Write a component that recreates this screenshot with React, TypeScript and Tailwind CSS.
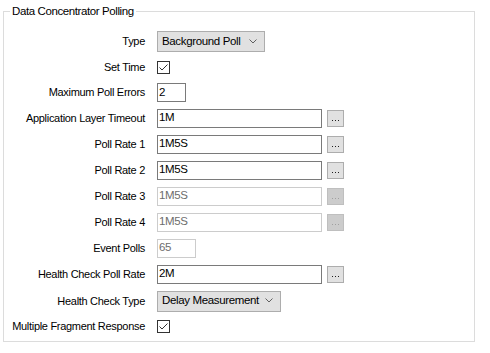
import React from "react";

const font = { fontFamily: '"Liberation Sans", Arial, sans-serif' };

function Dots({ disabled }: { disabled?: boolean }) {
  const c = disabled ? "bg-[#a0a0a0]" : "bg-[#202020]";
  return (
    <div
      className={`ml-[5px] w-[17px] h-[17px] border flex items-end justify-center pb-[5px] ${
        disabled ? "bg-[#cccccc] border-[#bfbfbf]" : "bg-[#e1e1e1] border-[#adadad]"
      }`}
    >
      <span className={`w-[1px] h-[1px] ${c}`} />
      <span className={`w-[1px] h-[1px] ml-[2px] ${c}`} />
      <span className={`w-[1px] h-[1px] ml-[2px] ${c}`} />
    </div>
  );
}

function TextBox({ value, w, disabled }: { value: string; w: number; disabled?: boolean }) {
  return (
    <div
      className={`h-[19px] border flex items-center pl-[1px] text-[11.5px] leading-none bg-white ${
        disabled ? "border-[#cccccc] text-[#6d6d6d]" : "border-[#7a7a7a] text-black"
      }`}
      style={{ width: w }}
    >
      {value}
    </div>
  );
}

function Combo({ value, w }: { value: string; w: number }) {
  return (
    <div
      className="h-[21px] border border-[#adadad] bg-[#e1e1e1] flex items-center justify-between pl-[4px] pr-[7px] text-[11.5px] text-black"
      style={{ width: w }}
    >
      <span>{value}</span>
      <svg width="8" height="5" viewBox="0 0 8 5" className="mb-[1px]">
        <path d="M0.5 0.5 L4 4 L7.5 0.5" fill="none" stroke="#606060" strokeWidth="1" />
      </svg>
    </div>
  );
}

function Check() {
  return (
    <div className="w-[13px] h-[13px] border border-[#333333] bg-white flex items-center justify-center">
      <svg width="11" height="11" viewBox="0 0 11 11">
        <path d="M1.5 5.5 L4 8 L9.5 2.5" fill="none" stroke="#333333" strokeWidth="1" />
      </svg>
    </div>
  );
}

function Row({ label, h, children }: { label: string; h: number; children: React.ReactNode }) {
  return (
    <div className="flex items-center" style={{ height: h }}>
      <div className="w-[141px] text-right text-[11px] tracking-[-0.3px] text-black whitespace-nowrap">{label}</div>
      <div className="ml-[12px] flex items-center tracking-[-0.35px]">{children}</div>
    </div>
  );
}

export default function App() {
  return (
    <div className="w-[490px] h-[353px] bg-white overflow-hidden" style={font}>
      <div className="ml-[3px] mt-[11px] w-[472px] h-[331px] border border-[#dcdcdc] relative pt-[17px]">
        <div className="absolute left-[6px] top-[-9px] bg-white px-[2px] text-[11.5px] tracking-[-0.4px] leading-[16px] text-black">
          Data Concentrator Polling
        </div>
        <Row label="Type" h={25}>
          <Combo value="Background Poll" w={108} />
        </Row>
        <Row label="Set Time" h={26}>
          <Check />
        </Row>
        <Row label="Maximum Poll Errors" h={25}>
          <TextBox value="2" w={29} />
        </Row>
        <Row label="Application Layer Timeout" h={26}>
          <TextBox value="1M" w={165} />
          <Dots />
        </Row>
        <Row label="Poll Rate 1" h={26}>
          <TextBox value="1M5S" w={165} />
          <Dots />
        </Row>
        <Row label="Poll Rate 2" h={26}>
          <TextBox value="1M5S" w={165} />
          <Dots />
        </Row>
        <Row label="Poll Rate 3" h={26}>
          <TextBox value="1M5S" w={165} disabled />
          <Dots disabled />
        </Row>
        <Row label="Poll Rate 4" h={26}>
          <TextBox value="1M5S" w={165} disabled />
          <Dots disabled />
        </Row>
        <Row label="Event Polls" h={26}>
          <TextBox value="65" w={39} disabled />
        </Row>
        <Row label="Health Check Poll Rate" h={26}>
          <TextBox value="2M" w={165} />
          <Dots />
        </Row>
        <Row label="Health Check Type" h={28}>
          <Combo value="Delay Measurement" w={124} />
        </Row>
        <Row label="Multiple Fragment Response" h={22}>
          <Check />
        </Row>
      </div>
    </div>
  );
}
